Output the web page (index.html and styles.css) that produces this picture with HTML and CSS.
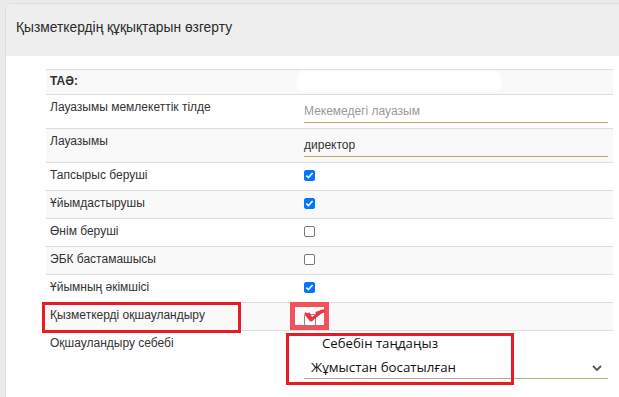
FILE: index.html
```html
<!DOCTYPE html>
<html lang="kk">
<head>
<meta charset="utf-8">
<link rel="stylesheet" href="styles.css">
</head>
<body>
<div class="page">
  <div class="card">
    <div class="card-header">Қызметкердің құқықтарын өзгерту</div>
    <div class="card-body">
      <div class="grid">
        <div class="row alt row-name">
          <div class="label bold">ТАӘ:</div>
          <div class="value"><div class="redact"></div></div>
        </div>
        <div class="row row-input">
          <div class="label">Лауазымы мемлекеттік тілде</div>
          <div class="value"><div class="field placeholder">Мекемедегі лауазым</div></div>
        </div>
        <div class="row alt row-input">
          <div class="label">Лауазымы</div>
          <div class="value"><div class="field">директор</div></div>
        </div>
        <div class="row row-check">
          <div class="label">Тапсырыс беруші</div>
          <div class="value"><span class="cb on"></span></div>
        </div>
        <div class="row alt row-check">
          <div class="label">Ұйымдастырушы</div>
          <div class="value"><span class="cb on"></span></div>
        </div>
        <div class="row row-check">
          <div class="label">Өнім беруші</div>
          <div class="value"><span class="cb"></span></div>
        </div>
        <div class="row alt row-check">
          <div class="label">ЭБК бастамашысы</div>
          <div class="value"><span class="cb"></span></div>
        </div>
        <div class="row row-check">
          <div class="label">Ұйымның әкімшісі</div>
          <div class="value"><span class="cb on"></span></div>
        </div>
        <div class="row alt row-check">
          <div class="label">Қызметкерді оқшауландыру</div>
          <div class="value"><span class="cb"></span></div>
        </div>
        <div class="row row-reason">
          <div class="label">Оқшауландыру себебі</div>
          <div class="value">
            <div class="reason-hint">Себебін таңдаңыз</div>
            <div class="select">
              <span>Жұмыстан босатылған</span>
              <svg class="chev" width="10" height="6" viewBox="0 0 10 6"><path d="M1 1 L5 5 L9 1" fill="none" stroke="#555" stroke-width="1.8"/></svg>
            </div>
          </div>
        </div>
      </div>
    </div>
  </div>

  <div class="mark mark-label"></div>
  <div class="mark-cb">
    <svg width="30" height="20" viewBox="0 0 30 20"><path d="M6 6 L11 12 L22 3" fill="none" stroke="#e8353f" stroke-width="3" stroke-linecap="round" stroke-linejoin="round"/><path d="M8 5 Q10 9 12 11" fill="none" stroke="#e8353f" stroke-width="3"/><path d="M17 5 L24 3" fill="none" stroke="#e8353f" stroke-width="3" stroke-linecap="round"/></svg>
  </div>
  <div class="mark mark-select"></div>
</div>
</body>
</html>
```

FILE: styles.css
```css
* { box-sizing: border-box; }
html, body {
  margin: 0;
  padding: 0;
  width: 619px;
  height: 397px;
  overflow: hidden;
  background: #e9eaea;
  font-family: "Liberation Sans", Arial, sans-serif;
  color: #333;
}
.page {
  position: relative;
  width: 619px;
  height: 397px;
  padding: 3px 0 0 5px;
}
.card {
  width: 630px;
  height: 420px;
  background: #fff;
  border: 1px solid #dedede;
  border-radius: 6px;
  overflow: hidden;
}
.card-header {
  height: 52px;
  background: #eeeeee;
  padding: 16px 0 0 10px;
  font-size: 13.8px;
  color: #2a2a2a;
}
.card-body {
  padding: 13px 0 0 40px;
}
.grid {
  width: 567px;
  font-size: 12px;
  line-height: 14px;
  color: #333;
}
.row {
  display: grid;
  grid-template-columns: 254px 1fr;
  border-top: 1px solid #dddddd;
}
.row.alt { background: #f9f9f9; }
.label { padding: 5px 4px 0; }
.value { padding: 0 4px; }
.bold { font-weight: bold; }

.row-name { height: 25px; }
.row-name .label { padding-top: 4px; }
.redact {
  margin: 2px 0 0 -6px;
  width: 202px;
  height: 18px;
  background: #fff;
  border-radius: 5px;
  box-shadow: 0 0 3px 1px #fff;
}
.row-input { height: 34px; }
.field {
  width: 304px;
  height: 23px;
  margin-top: 5px;
  padding-top: 4px;
  color: #333;
  border-bottom: 1px solid #bfa76a;
}
.field.placeholder { color: #999; }
.row-check { height: 28px; }
.row-check .value { padding-top: 7px; }
.cb {
  display: block;
  width: 11px;
  height: 11px;
  border: 1px solid #777;
  border-radius: 2px;
  background: #fff;
}
.cb.on {
  border-color: #0075ff;
  background: #0075ff url("data:image/svg+xml;utf8,<svg xmlns='http://www.w3.org/2000/svg' width='11' height='11' viewBox='0 0 11 11'><path d='M2.3 5.6 L4.4 7.6 L8.6 3' fill='none' stroke='white' stroke-width='1.6'/></svg>") no-repeat center;
}
.row-reason { height: 70px; }
.reason-hint {
  font-family: "Open Sans", "Noto Sans", sans-serif;
  font-size: 13.2px;
  line-height: 18px;
  color: #111;
  margin: 3px 0 0 18px;
  height: 18px;
}
.select {
  display: flex;
  align-items: center;
  justify-content: space-between;
  width: 304px;
  height: 27px;
  padding: 4px 6px 0 7px;
  font-family: "Open Sans", "Noto Sans", sans-serif;
  font-size: 13.3px;
  color: #111;
  border-bottom: 1px solid #b8ac80;
}
.chev { display: block; margin-top: 1px; }

.mark {
  position: absolute;
  border: 3px solid #e81c24;
}
.mark-label { left: 42px; top: 302px; width: 199px; height: 31px; }
.mark-select { left: 286px; top: 333px; width: 228px; height: 52px; }
.mark-cb {
  position: absolute;
  left: 290px;
  top: 302px;
  width: 39px;
  height: 28px;
  border: 5px solid #f0535c;
  background: #fbfbfb;
}
.mark-cb::before {
  content: "";
  position: absolute;
  left: 9px;
  top: 7px;
  width: 10px;
  height: 10px;
  border: 1px solid #888;
  border-radius: 2px;
}
.mark-cb svg {
  position: absolute;
  left: 5px;
  top: 1px;
}
```
